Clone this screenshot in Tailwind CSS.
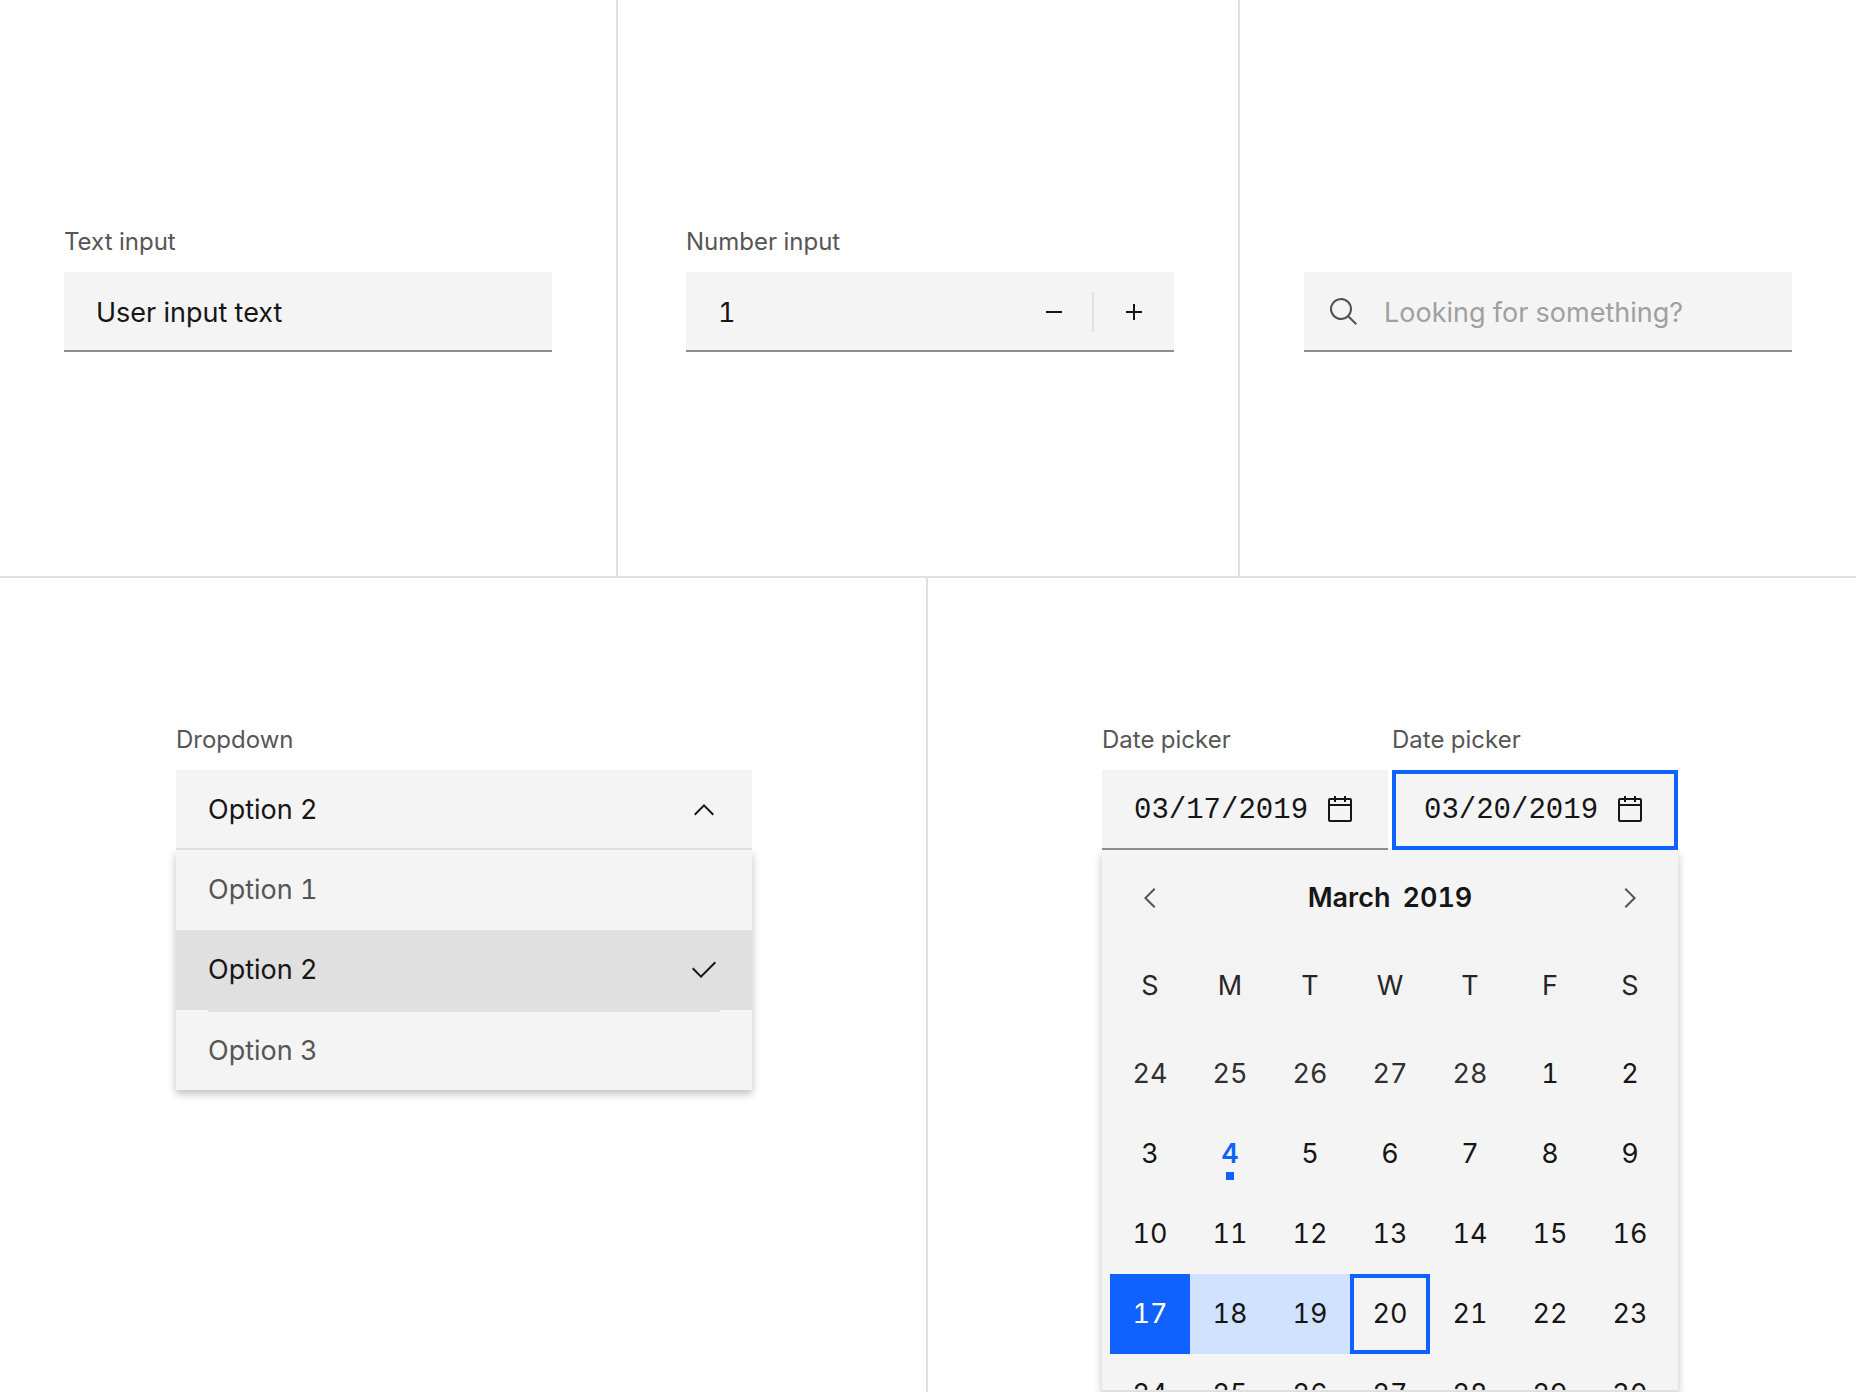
<!DOCTYPE html>
<html lang="en">
<head>
<meta charset="utf-8">
<meta name="viewport" content="width=device-width, initial-scale=1">
<title>Form controls</title>
<script src="https://cdn.jsdelivr.net/npm/@tailwindcss/browser@4"></script>
</head>
<body class="flex h-screen flex-col overflow-hidden bg-white font-['Inter',sans-serif] text-[27px] leading-9 text-[#161616] tabular-nums">

<section class="grid grid-cols-[618fr_622fr_616fr] border-b-2 border-[#e0e0e0]">
  <!-- Text input -->
  <div class="border-r-2 border-[#e0e0e0] px-16 py-56">
    <label for="text-input" class="mb-3 block text-[24px] leading-9 text-[#565656]">Text input</label>
    <input id="text-input" type="text" value="User input text" class="block h-20 w-full bg-[#f4f4f4] px-8 shadow-[inset_0_-2px_0_#8d8d8d] outline-none">
  </div>

  <!-- Number input -->
  <div class="border-r-2 border-[#e0e0e0] py-56 pr-16 pl-[68px]">
    <label for="number-input" class="mb-3 block text-[24px] leading-9 text-[#565656]">Number input</label>
    <div class="flex h-20 items-center bg-[#f4f4f4] shadow-[inset_0_-2px_0_#8d8d8d]">
      <input id="number-input" type="number" value="1" class="h-20 w-0 min-w-0 flex-1 appearance-none bg-transparent pl-8 tabular-nums outline-none [-moz-appearance:textfield] [&::-webkit-inner-spin-button]:appearance-none">
      <button type="button" aria-label="Decrease" class="flex h-20 w-19 items-center justify-center">
        <svg class="size-8" viewBox="0 0 32 32" fill="#161616"><path d="M8 15h16v2H8z"/></svg>
      </button>
      <span class="h-10 w-0.5 bg-[#e0e0e0]"></span>
      <button type="button" aria-label="Increase" class="flex h-20 w-20 items-center justify-center">
        <svg class="size-8" viewBox="0 0 32 32" fill="#161616"><path d="M17 15V8h-2v7H8v2h7v7h2v-7h7v-2z"/></svg>
      </button>
    </div>
  </div>

  <!-- Search -->
  <div class="px-16 pt-[272px] pb-56">
    <label for="search" class="sr-only">Search</label>
    <div class="relative">
      <svg class="absolute top-6 left-6 size-8" viewBox="0 0 32 32" fill="#525252"><path d="M29 27.586l-7.552-7.552a11.018 11.018 0 1 0-1.414 1.414L27.586 29ZM4 13a9 9 0 1 1 9 9 9.01 9.01 0 0 1-9-9Z"/></svg>
      <input id="search" type="search" placeholder="Looking for something?" class="block h-20 w-full appearance-none bg-[#f4f4f4] pr-8 pl-20 shadow-[inset_0_-2px_0_#8d8d8d] outline-none placeholder:text-[#a0a0a0]">
    </div>
  </div>
</section>

<section class="grid min-h-0 flex-1 grid-cols-2 grid-rows-[minmax(0,1fr)]">
  <!-- Dropdown -->
  <div class="border-r-2 border-[#e0e0e0] pt-36 pr-[174px] pl-44">
    <label for="dropdown" class="mb-3 block text-[24px] leading-9 text-[#565656]">Dropdown</label>
    <div class="relative z-10">
      <select id="dropdown" class="block h-20 w-full appearance-none bg-[#f4f4f4] px-8 tabular-nums shadow-[inset_0_-2px_0_#e0e0e0] outline-none">
        <option>Option 1</option>
        <option selected>Option 2</option>
        <option>Option 3</option>
      </select>
      <svg class="pointer-events-none absolute top-6 right-8 size-8" viewBox="0 0 32 32" fill="#161616"><path d="M16 10l10 10-1.4 1.4-8.6-8.6-8.6 8.6L6 20z"/></svg>
    </div>
    <ul role="listbox" aria-label="Dropdown" class="bg-[#f4f4f4] shadow-[0_4px_8px_rgba(0,0,0,0.25)]">
      <li role="option" class="flex h-20 items-center px-8 text-[#565656]">Option 1</li>
      <li role="option" aria-selected="true" class="flex h-20 items-center justify-between bg-[#e0e0e0] px-8">Option 2
        <svg class="size-8" viewBox="0 0 32 32" fill="#161616"><path d="M13 24L4 15l1.4-1.4L13 21.2 26.6 7.6 28 9z"/></svg>
      </li>
      <li role="option" class="px-8 text-[#565656]"><span class="flex h-20 items-center border-t-2 border-[#e0e0e0]">Option 3</span></li>
    </ul>
  </div>

  <!-- Date range picker -->
  <div class="flex min-h-0 flex-col pt-36 pr-[178px] pl-[174px]">
    <div class="relative z-10 grid grid-cols-2 gap-1">
      <div>
        <label for="date-start" class="mb-3 block text-[24px] leading-9 text-[#565656]">Date picker</label>
        <div class="flex h-20 items-center bg-[#f4f4f4] px-8 shadow-[inset_0_-2px_0_#8d8d8d]">
          <input id="date-start" type="text" value="03/17/2019" class="h-18 w-0 min-w-0 flex-1 bg-transparent font-['Liberation_Mono',monospace] text-[29px] outline-none">
          <svg class="size-8 shrink-0" viewBox="0 0 32 32" fill="#161616"><path d="M26 4h-4V2h-2v2h-8V2h-2v2H6a2 2 0 0 0-2 2v20a2 2 0 0 0 2 2h20a2 2 0 0 0 2-2V6a2 2 0 0 0-2-2Zm0 22H6V12h20Zm0-16H6V6h4v2h2V6h8v2h2V6h4Z"/></svg>
        </div>
      </div>
      <div>
        <label for="date-end" class="mb-3 block text-[24px] leading-9 text-[#565656]">Date picker</label>
        <div class="flex h-20 items-center border-4 border-[#0f62fe] bg-[#f4f4f4] px-7">
          <input id="date-end" type="text" value="03/20/2019" class="h-18 w-0 min-w-0 flex-1 bg-transparent font-['Liberation_Mono',monospace] text-[29px] outline-none">
          <svg class="size-8 shrink-0" viewBox="0 0 32 32" fill="#161616"><path d="M26 4h-4V2h-2v2h-8V2h-2v2H6a2 2 0 0 0-2 2v20a2 2 0 0 0 2 2h20a2 2 0 0 0 2-2V6a2 2 0 0 0-2-2Zm0 22H6V12h20Zm0-16H6V6h4v2h2V6h8v2h2V6h4Z"/></svg>
        </div>
      </div>
    </div>

    <div class="min-h-0 flex-1 overflow-hidden border-b-2 border-[#e0e0e0] bg-[#f4f4f4] px-2 shadow-[0_4px_8px_rgba(0,0,0,0.25)]">
      <div class="flex h-24 items-center justify-between">
        <button type="button" aria-label="Previous month" class="flex h-20 w-20 items-center justify-center">
          <svg class="size-8" viewBox="0 0 32 32" fill="#525252"><path d="M10 16L20 6l1.4 1.4-8.6 8.6 8.6 8.6L20 26z"/></svg>
        </button>
        <h2 class="flex gap-3 font-semibold"><span>March</span><span>2019</span></h2>
        <button type="button" aria-label="Next month" class="flex h-20 w-20 items-center justify-center">
          <svg class="size-8" viewBox="0 0 32 32" fill="#525252"><path d="M22 16L12 26l-1.4-1.4 8.6-8.6-8.6-8.6L12 6z"/></svg>
        </button>
      </div>
      <table class="w-full table-fixed border-collapse text-center">
        <thead class="bg-[#f3f3f3] text-[#262626]">
          <tr class="h-20">
            <th class="p-0 font-normal">S</th><th class="p-0 font-normal">M</th><th class="p-0 font-normal">T</th><th class="p-0 font-normal">W</th><th class="p-0 font-normal">T</th><th class="p-0 font-normal">F</th><th class="p-0 font-normal">S</th>
          </tr>
        </thead>
        <tbody>
          <tr class="h-2"><td colspan="7" class="p-0"></td></tr>
          <tr class="h-20">
            <td class="p-0 text-[#303030]">24</td><td class="p-0 text-[#303030]">25</td><td class="p-0 text-[#303030]">26</td><td class="p-0 text-[#303030]">27</td><td class="p-0 text-[#303030]">28</td><td class="p-0">1</td><td class="p-0">2</td>
          </tr>
          <tr class="h-20">
            <td class="p-0">3</td>
            <td class="relative p-0 font-semibold text-[#0f62fe]">4<span class="absolute bottom-3.5 left-9 size-2 bg-[#0f62fe]"></span></td>
            <td class="p-0">5</td><td class="p-0">6</td><td class="p-0">7</td><td class="p-0">8</td><td class="p-0">9</td>
          </tr>
          <tr class="h-20">
            <td class="p-0">10</td><td class="p-0">11</td><td class="p-0">12</td><td class="p-0">13</td><td class="p-0">14</td><td class="p-0">15</td><td class="p-0">16</td>
          </tr>
          <tr class="h-20">
            <td class="bg-[#0f62fe] p-0 text-white">17</td><td class="bg-[#d0e2ff] p-0">18</td><td class="bg-[#d0e2ff] p-0">19</td><td class="p-0 shadow-[inset_0_0_0_4px_#0f62fe]">20</td><td class="p-0">21</td><td class="p-0">22</td><td class="p-0">23</td>
          </tr>
          <tr class="h-20">
            <td class="p-0">24</td><td class="p-0">25</td><td class="p-0">26</td><td class="p-0">27</td><td class="p-0">28</td><td class="p-0">29</td><td class="p-0">30</td>
          </tr>
        </tbody>
      </table>
    </div>
  </div>
</section>

</body>
</html>
